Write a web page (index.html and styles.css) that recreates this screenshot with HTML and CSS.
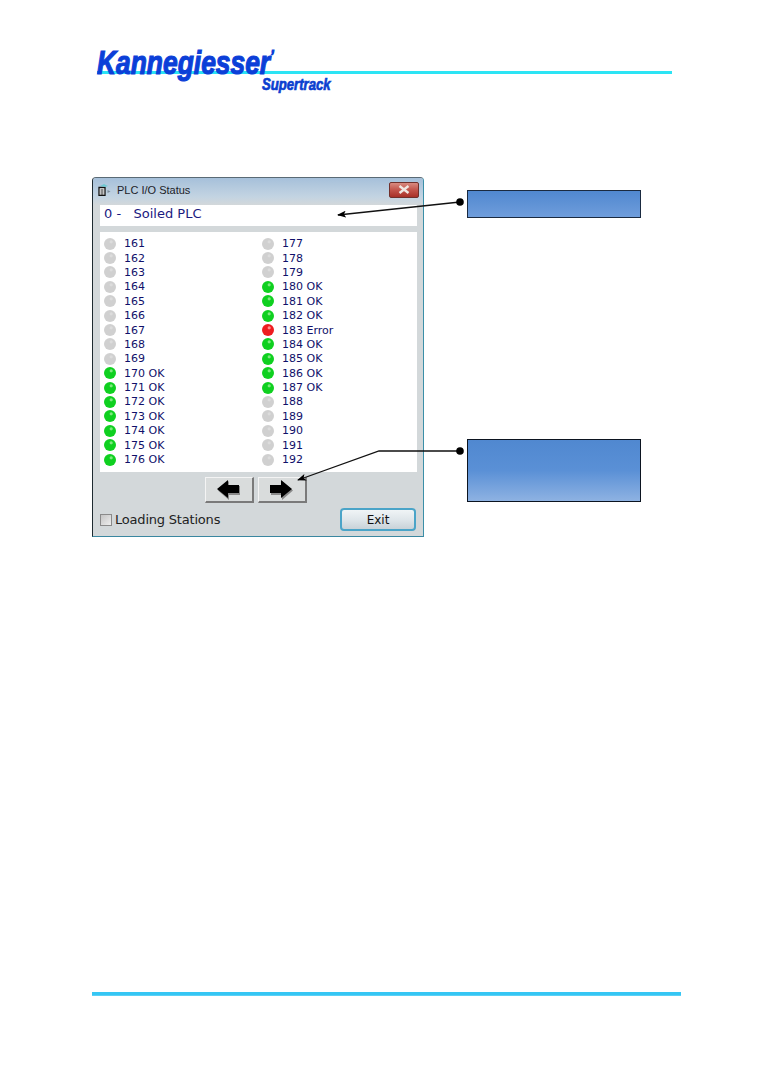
FILE: index.html
```html
<!DOCTYPE html>
<html lang="en">
<head>
<meta charset="utf-8">
<title>PLC I/O Status</title>
<link rel="stylesheet" href="styles.css">
</head>
<body>
<div class="page">
  <header class="header">
    <div class="brand">Kannegiesser<span class="reg">’</span></div>
    <div class="rules"><span class="rule-left"></span><span class="rule-right"></span></div>
    <div class="product">Supertrack</div>
  </header>

  <main class="main">
    <section class="window">
      <div class="titlebar">
        <svg class="app-icon" viewBox="0 0 14 12" width="14" height="12">
          <path d="M1 3.500h6v8H1z" fill="#fff" stroke="#111" stroke-width="1.300"/>
          <path d="M2.500 6h3M2.500 8h3M2.500 10h3" stroke="#111"/>
          <path d="M2 2l4-2 4 2-3 1z" fill="#6fc8d2"/>
          <path d="M9.500 6l3 1.500-3 1.500z" fill="#7c8c9a"/>
        </svg>
        <span class="title">PLC I/O Status</span>
        <span class="close">
          <svg viewBox="0 0 12 9" width="12" height="9"><path d="M1.500 1l9 7M10.500 1l-9 7" stroke="#f0e8e4" stroke-width="2.400"/></svg>
        </span>
      </div>
      <div class="plc-name">0 -   Soiled PLC</div>
      <div class="io-list">
        <div class="io"><i class="led off"></i><span>161</span></div>
        <div class="io"><i class="led off"></i><span>162</span></div>
        <div class="io"><i class="led off"></i><span>163</span></div>
        <div class="io"><i class="led off"></i><span>164</span></div>
        <div class="io"><i class="led off"></i><span>165</span></div>
        <div class="io"><i class="led off"></i><span>166</span></div>
        <div class="io"><i class="led off"></i><span>167</span></div>
        <div class="io"><i class="led off"></i><span>168</span></div>
        <div class="io"><i class="led off"></i><span>169</span></div>
        <div class="io"><i class="led ok"></i><span>170 OK</span></div>
        <div class="io"><i class="led ok"></i><span>171 OK</span></div>
        <div class="io"><i class="led ok"></i><span>172 OK</span></div>
        <div class="io"><i class="led ok"></i><span>173 OK</span></div>
        <div class="io"><i class="led ok"></i><span>174 OK</span></div>
        <div class="io"><i class="led ok"></i><span>175 OK</span></div>
        <div class="io"><i class="led ok"></i><span>176 OK</span></div>
        <div class="io"><i class="led off"></i><span>177</span></div>
        <div class="io"><i class="led off"></i><span>178</span></div>
        <div class="io"><i class="led off"></i><span>179</span></div>
        <div class="io"><i class="led ok"></i><span>180 OK</span></div>
        <div class="io"><i class="led ok"></i><span>181 OK</span></div>
        <div class="io"><i class="led ok"></i><span>182 OK</span></div>
        <div class="io"><i class="led err"></i><span>183 Error</span></div>
        <div class="io"><i class="led ok"></i><span>184 OK</span></div>
        <div class="io"><i class="led ok"></i><span>185 OK</span></div>
        <div class="io"><i class="led ok"></i><span>186 OK</span></div>
        <div class="io"><i class="led ok"></i><span>187 OK</span></div>
        <div class="io"><i class="led off"></i><span>188</span></div>
        <div class="io"><i class="led off"></i><span>189</span></div>
        <div class="io"><i class="led off"></i><span>190</span></div>
        <div class="io"><i class="led off"></i><span>191</span></div>
        <div class="io"><i class="led off"></i><span>192</span></div>
      </div>
      <div class="pager">
        <button class="nav-btn" type="button">
          <svg viewBox="0 0 24 20" width="24" height="20"><path d="M12 1v5h11v9H12v5L1 10.500z" fill="#8a8a8a"/><path d="M11 0v5h11v8H11v5L0 9z" fill="#000"/></svg>
        </button>
        <button class="nav-btn" type="button">
          <svg viewBox="0 0 24 20" width="24" height="20"><path d="M12 1v5H1v9h11v5l11-9.500z" fill="#8a8a8a"/><path d="M11 0v5H0v8h11v5l11-9z" fill="#000"/></svg>
        </button>
      </div>
      <div class="footer-row">
        <label class="check"><span class="box"></span>Loading Stations</label>
        <button class="exit" type="button">Exit</button>
      </div>
    </section>

    <aside class="callouts">
      <div class="callout small"></div>
      <div class="callout large"></div>
    </aside>
  </main>

  <footer class="page-rule"></footer>

  <svg class="leaders" viewBox="0 0 761 1075" width="761" height="1075">
    <defs>
      <marker id="tip" markerWidth="9" markerHeight="7" refX="8" refY="3.500" orient="auto-start-reverse" markerUnits="userSpaceOnUse">
        <path d="M0 0L9 3.500 0 7 2 3.500z" fill="#000"/>
      </marker>
    </defs>
    <path class="leader" d="M460 202L338 215" marker-end="url(#tip)"/>
    <path class="leader" d="M460 451H379L298 480" marker-end="url(#tip)"/>
    <circle cx="460" cy="202" r="3.800"/>
    <circle cx="460" cy="451" r="3.800"/>
  </svg>
</div>
</body>
</html>
```
FILE: styles.css
```css
* { box-sizing: border-box; }
html, body { margin: 0; padding: 0; background: #fff; }
.page {
  position: relative;
  width: 761px;
  height: 1075px;
  overflow: hidden;
  font-family: "DejaVu Sans", sans-serif;
}

/* header */
.header { padding: 41px 89px 0 97px; height: 177px; }
.brand {
  position: relative;
  z-index: 1;
  height: 31px;
  width: 230px;
  font: italic 700 33px/31px "Liberation Sans", sans-serif;
  color: #0b3fd8;
  -webkit-text-stroke: 1.2px #0b3fd8;
  white-space: nowrap;
  transform: scaleX(0.8);
  transform-origin: left center;
}
.reg { font-size: 16px; vertical-align: 12px; }
.rules { display: flex; gap: 2px; height: 3px; margin-top: -1px; }
.rule-left { width: 165px; background: #2ce4f4; }
.rule-right { flex: 1; background: #2ce4f4; }
.product {
  margin: 2px 0 0 165px;
  width: 90px;
  font: italic 700 16px/17px "Liberation Sans", sans-serif;
  color: #0b3fd0;
  -webkit-text-stroke: 0.7px #0b3fd0;
  white-space: nowrap;
  transform: scaleX(0.82);
  transform-origin: left center;
}

/* window + callouts */
.main { display: flex; align-items: flex-start; margin-left: 92px; }
.window {
  width: 332px;
  height: 360px;
  padding: 0 6px 0 7px;
  background: #d3d8da;
  border: 1px solid #1e2a30;
  border-top-color: #5a6a75;
  border-right-color: #3b8fa8;
  border-bottom-color: #3a87a0;
  border-radius: 4px 4px 0 0;
}
.titlebar {
  display: flex;
  align-items: center;
  height: 27px;
  margin: 0 -6px 0 -7px;
  padding: 0 4px 4px 4px;
  background: linear-gradient(#a6c0da, #c3d4e2 70%, #d3d8da);
  border-radius: 3px 3px 0 0;
}
.app-icon { margin: 0 5px 0 1px; }
.title {
  flex: 1;
  font: 11px/16px "Liberation Sans", sans-serif;
  color: #1c2228;
}
.close {
  display: flex;
  align-items: center;
  justify-content: center;
  width: 30px;
  height: 16px;
  background: linear-gradient(#d88a80, #c2534a 50%, #a83028);
  border: 1px solid #70302c;
  border-radius: 2px;
}
.plc-name {
  height: 21px;
  padding-left: 4px;
  background: #fff;
  color: #1a1a80;
  font-size: 13px;
  line-height: 18px;
  white-space: pre;
}
.io-list {
  display: grid;
  grid-template-rows: repeat(16, 14.4px);
  grid-template-columns: 158px 159px;
  grid-auto-flow: column;
  height: 240px;
  margin-top: 6px;
  padding-top: 5px;
  background: #fff;
}
.io {
  display: flex;
  align-items: center;
  gap: 8px;
  padding-left: 4px;
  font-size: 11px;
  line-height: 14px;
  color: #10106a;
  white-space: nowrap;
}
.led {
  flex: none;
  width: 12px;
  height: 12px;
  margin-top: -1px;
  border-radius: 50%;
}
.off { background: radial-gradient(circle at 60% 32%, #dcdcdc 0 1px, #d0d0d0 2px); }
.ok  { background: radial-gradient(circle at 60% 32%, #7ee87e 0 1px, #0fd020 2px); }
.err { background: radial-gradient(circle at 60% 32%, #ff9090 0 1px, #ee1c20 2px); }

.pager { display: flex; justify-content: center; gap: 4px; margin-top: 5px; padding-right: 6px; }
.nav-btn {
  display: flex;
  align-items: center;
  justify-content: center;
  width: 49px;
  height: 26px;
  padding: 0;
  background: #d9dcdc;
  border: 1px solid;
  border-color: #f4f4f4 #7a7a7a #7a7a7a #f4f4f4;
  border-width: 1px 2px 2px 1px;
}
.footer-row {
  display: flex;
  align-items: center;
  justify-content: space-between;
  margin-top: 5px;
  padding-right: 1px;
}
.check {
  display: flex;
  align-items: center;
  gap: 3px;
  font-size: 13px;
  letter-spacing: -0.2px;
  color: #222;
  white-space: nowrap;
}
.box {
  width: 12px;
  height: 12px;
  background: linear-gradient(135deg, #c4c4c4, #eee);
  border: 1px solid #8a8a8a;
}
.exit {
  width: 76px;
  height: 23px;
  padding: 0;
  font: 12px "DejaVu Sans", sans-serif;
  color: #111;
  background: linear-gradient(#f0f4f6, #dfe6ea 50%, #c8d2d8);
  border: 2px solid #4aa4c8;
  border-radius: 4px;
}

.callouts { display: flex; flex-direction: column; margin: 13px 0 0 43px; }
.callout {
  width: 174px;
  background: linear-gradient(#5088d0, #5a90d6 50%, #8eb2e2);
  border: 1.5px solid #1a2a40;
}
.small { height: 28px; background: linear-gradient(#5088d0, #6f9ddb); }
.large { height: 63px; margin-top: 221px; border-color: #0c1420; }

.page-rule {
  width: 589px;
  height: 4px;
  margin: 455px 0 0 92px;
  background: linear-gradient(#35c6f4 75%, #7fdcf8);
}

/* annotation lines lying over the page */
.leaders { position: absolute; left: 0; top: 0; pointer-events: none; }
.leader { fill: none; stroke: #111; stroke-width: 1.300; }
```
